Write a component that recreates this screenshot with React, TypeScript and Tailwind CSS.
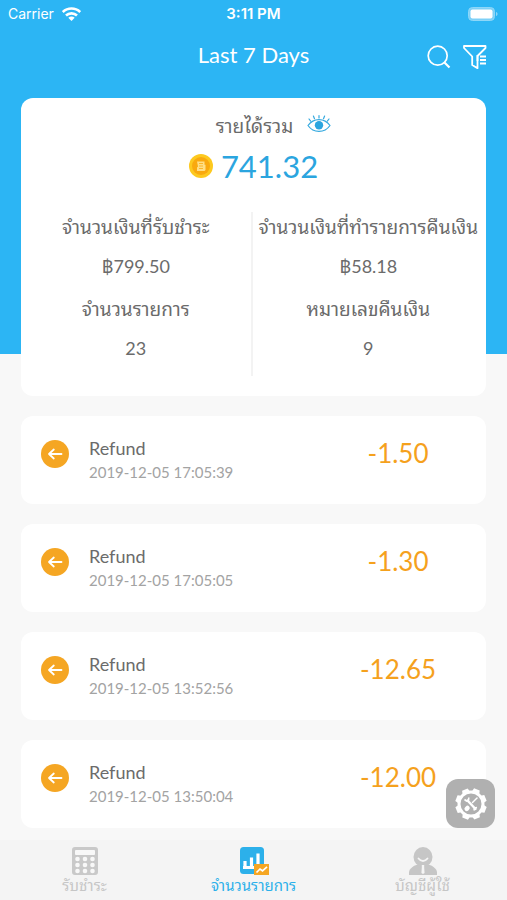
import { useState } from "react";

type Tab = "receive" | "transactions" | "account";

const stats = [
  [
    { label: "จำนวนเงินที่รับชำระ", value: "฿799.50" },
    { label: "จำนวนรายการ", value: "23" },
  ],
  [
    { label: "จำนวนเงินที่ทำรายการคืนเงิน", value: "฿58.18" },
    { label: "หมายเลขคืนเงิน", value: "9" },
  ],
];

const refunds = [
  { date: "2019-12-05 17:05:39", amount: "-1.50" },
  { date: "2019-12-05 17:05:05", amount: "-1.30" },
  { date: "2019-12-05 13:52:56", amount: "-12.65" },
  { date: "2019-12-05 13:50:04", amount: "-12.00" },
];

function WifiIcon() {
  return (
    <svg width="19" height="14" viewBox="0 0 19 14" fill="none" stroke="white" strokeWidth="2.600">
      <path d="M.8 5C5.600.4 13.400.4 18.200 5" />
      <path d="M4 8.500c3-2.900 8-2.900 11 0" />
      <path d="M9.500 14 6.300 10.800c1.800-1.600 4.600-1.600 6.400 0z" fill="white" stroke="none" />
    </svg>
  );
}

function BatteryIcon() {
  return (
    <svg width="31" height="14" viewBox="0 0 31 14">
      <rect x=".5" y=".5" width="26" height="13" rx="4" fill="#7dd0f7" stroke="#8ed7f8" />
      <rect x="2.500" y="2.500" width="22" height="9" rx="2" fill="white" />
      <path d="M28 5c2 .6 2 3.400 0 4z" fill="#8ed7f8" />
    </svg>
  );
}

function SearchIcon() {
  return (
    <svg width="24" height="24" viewBox="0 0 24 24" fill="none" stroke="white" strokeWidth="1.700">
      <circle cx="10.700" cy="10.700" r="9.500" />
      <path d="m17.500 17.500 5 5" strokeWidth="2.200" />
    </svg>
  );
}

function FilterIcon() {
  return (
    <svg width="24" height="24" viewBox="0 0 24 24" fill="none" stroke="white" strokeWidth="1.800" strokeLinejoin="round">
      <path d="M14.500 15v8.200L9.200 20V11.500L1 3V1h21.500v2L14.500 11z" />
      <path d="M14.500 10v6M17 11.500h6M17 15h6M17 18.500h6" />
    </svg>
  );
}

function EyeIcon() {
  return (
    <svg width="24" height="20" viewBox="0 0 24 20" fill="none" stroke="#35a9df" strokeWidth="1.200" strokeLinecap="round">
      <path d="M1 11.500C6.500 3.600 17.500 3.600 23 11.500 17.500 19.400 6.500 19.400 1 11.500z" />
      <circle cx="12" cy="11.300" r="4.200" fill="#2ba5df" stroke="none" />
      <path d="M12 4V1.500M7.500 4.700 6.400 2M16.500 4.700 17.600 2M3.700 7.200 2 5M20.300 7.200 22 5" />
    </svg>
  );
}

function CoinIcon() {
  return (
    <svg width="24" height="24" viewBox="0 0 24 24">
      <circle cx="12" cy="12" r="12" fill="#fdc91f" />
      <circle cx="12" cy="12" r="9" fill="#f9a90f" />
      <path d="M8 7.500h7.500v3.200h1V16l-1 1H8v-3.500l1-1z" fill="#ffdf86" />
      <path d="M10 9.500h4M10 12h4M10 14.500h4" stroke="#f9b62e" />
    </svg>
  );
}

function RefundIcon() {
  return (
    <svg width="28" height="28" viewBox="0 0 28 28" fill="none" stroke="white" strokeWidth="1.800" strokeLinecap="round" strokeLinejoin="round">
      <circle cx="14" cy="14" r="14" fill="#f5a623" stroke="none" />
      <path d="M20.500 14H8.500M12.800 9.500 8 14l4.800 4.500" />
    </svg>
  );
}

function CalculatorIcon() {
  return (
    <svg width="28" height="28" viewBox="0 0 28 28">
      <rect x="1" width="26" height="28" rx="3" fill="#c9c9c9" />
      <rect x="4" y="3" width="20" height="5" rx="1" fill="#f8f8f8" />
      {[12, 18, 24].map((y) =>
        [6.5, 14, 21.5].map((x) => <circle key={`${x}-${y}`} cx={x} cy={y} r="2.300" fill="#f8f8f8" />)
      )}
    </svg>
  );
}

function ChartIcon() {
  return (
    <svg width="30" height="28" viewBox="0 0 30 28">
      <rect x="1" width="24" height="27" rx="3.500" fill="#2cb0ea" />
      <path d="M4 20.500h17M6 20v-6M12.500 20V10.500M19 20V6.500" stroke="white" strokeWidth="3.200" />
      <path d="M15 17h15v11H15z" fill="#f5a623" />
      <path d="m17.500 25.500 3.500-3.500 2.500 1.800 4.500-4" fill="none" stroke="white" strokeWidth="1.700" />
    </svg>
  );
}

function PersonIcon() {
  return (
    <svg width="28" height="28" viewBox="0 0 28 28">
      <path d="M0 28v-3c1-4 4.500-6.500 9-7.500h10c4.500 1 8 3.500 9 7.500v3z" fill="#c6c6c6" />
      <ellipse cx="14" cy="10" rx="9.500" ry="10" fill="#c6c6c6" />
      <path d="M9.500 11.500c2.500 3.300 6.500 3.300 9 0" fill="none" stroke="#f5f5f5" strokeWidth="1.800" strokeLinecap="round" />
      <path d="M12.800 18h2.400v3l.4 5-1.600 1-1.600-1 .4-5z" fill="#f5f5f5" />
    </svg>
  );
}

function ToolsIcon() {
  return (
    <svg width="32" height="32" viewBox="0 0 32 32">
      <circle cx="16" cy="16" r="12" fill="none" stroke="white" strokeWidth="3" />
      {[22, 67, 112, 157, 202, 247, 292, 337].map((angle) => (
        <path key={angle} d="M12 4 13 .3h6L20 4z" fill="white" transform={`rotate(${angle} 16 16)`} />
      ))}
      <path d="m12.500 12.500 8 8.500" stroke="white" strokeWidth="2.400" strokeLinecap="round" />
      <path d="M9.500 11.500 11.500 13l2-.8.300-2.700M19 22.500l.5-2.500 2.500-.5" fill="none" stroke="white" strokeWidth="1.600" />
      <path d="m22 10-4.500 4.500" stroke="white" strokeWidth="1.500" strokeLinecap="round" />
      <path d="m12.500 20-.8.800" stroke="white" strokeWidth="4.500" strokeLinecap="round" />
    </svg>
  );
}

const tabs: { id: Tab; label: string; icon: React.ReactNode }[] = [
  { id: "receive", label: "รับชำระ", icon: <CalculatorIcon /> },
  { id: "transactions", label: "จำนวนรายการ", icon: <ChartIcon /> },
  { id: "account", label: "บัญชีผู้ใช้", icon: <PersonIcon /> },
];

export default function App() {
  const [activeTab, setActiveTab] = useState<Tab>("transactions");

  return (
    <div className="min-h-screen flex flex-col bg-[#f8f8f8] font-[Lato,Thonburi,'Noto_Sans_Thai_Looped',Loma,Waree,Garuda,'Noto_Sans_Thai',sans-serif] text-[#6b6b6b]">
      <header className="bg-[#2cb5f4] text-white pb-64">
        <div className="h-7 px-2 grid grid-cols-3 items-center text-sm font-[Inter,sans-serif]">
          <div className="flex items-center gap-2">
            <span>Carrier</span>
            <WifiIcon />
          </div>
          <span className="text-center text-[15px] font-semibold">3:11 PM</span>
          <div className="flex justify-end">
            <BatteryIcon />
          </div>
        </div>
        <div className="h-[70px] px-5 pb-4 grid grid-cols-[1fr_auto_1fr] items-center">
          <h1 className="col-start-2 text-[22px] leading-7">Last 7 Days</h1>
          <div className="flex justify-end gap-3 pt-1">
            <button aria-label="Search">
              <SearchIcon />
            </button>
            <button aria-label="Filter">
              <FilterIcon />
            </button>
          </div>
        </div>
      </header>

      <main className="-mt-64 flex-1 px-5 pb-3 flex flex-col gap-5">
        <section className="bg-white rounded-xl mx-px pt-3 pb-5">
          <div className="flex items-center justify-center gap-[14px] h-8 pl-10">
            <h2 className="text-[19px]">รายได้รวม</h2>
            <button aria-label="Hide total" className="pb-1">
              <EyeIcon />
            </button>
          </div>
          <div className="flex items-center justify-center gap-2 h-12">
            <CoinIcon />
            <span className="text-[31px] text-[#2ba5df]">741.32</span>
          </div>
          <div className="mt-[22px] pr-[2px] grid grid-cols-2 divide-x-2 divide-[#f3f3f3]">
            {stats.map((column, i) => (
              <dl key={i} className="text-center text-lg">
                {column.map(({ label, value }) => (
                  <div key={label} className="h-[82px]">
                    <dt className="text-[19px] leading-[30px] whitespace-nowrap">{label}</dt>
                    <dd className="mt-2 leading-8">{value}</dd>
                  </div>
                ))}
              </dl>
            ))}
          </div>
        </section>

        <ul className="mx-px flex flex-col gap-5">
          {refunds.map(({ date, amount }) => (
            <li key={date} className="h-[88px] bg-white rounded-xl flex px-5 pt-5">
              <div className="pt-1">
                <RefundIcon />
              </div>
              <div className="ml-5 flex-1">
                <p className="text-lg leading-6">Refund</p>
                <p className="text-[15px] leading-6 text-[#a3a3a3]">{date}</p>
              </div>
              <p className="w-34 text-center text-[26px] leading-[34px] text-[#f5a11d]">{amount}</p>
            </li>
          ))}
        </ul>
      </main>

      <button
        aria-label="Tools"
        className="fixed right-3 bottom-[72px] size-[49px] rounded-xl bg-[#b0b0b0] flex items-center justify-center"
      >
        <ToolsIcon />
      </button>

      <nav className="h-[60px] bg-[#f4f4f4] grid grid-cols-3">
        {tabs.map(({ id, label, icon }) => (
          <button
            key={id}
            onClick={() => setActiveTab(id)}
            className={`flex flex-col items-center pt-[7px] text-[15px] leading-5 ${
              activeTab === id ? "text-[#2cb0ea]" : "text-[#c6c6c6]"
            }`}
          >
            {icon}
            {label}
          </button>
        ))}
      </nav>
    </div>
  );
}
